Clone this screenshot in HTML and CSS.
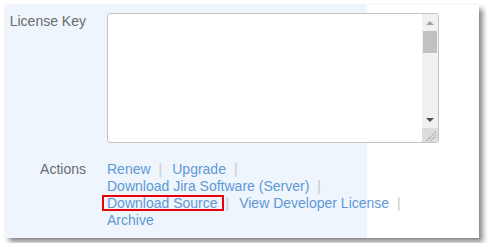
FILE: index.html
```html
<!doctype html>
<html lang="en">
<head>
<meta charset="UTF-8">
<title>License</title>
<link rel="stylesheet" href="styles.css">
</head>
<body>
	<div class="card">
		<div class="row">
			<div class="label">License Key</div>
			<div class="keybox">
				<div class="keytext"></div>
				<div class="scroll">
					<div class="arrow up"></div>
					<div class="thumb"></div>
					<div class="track"></div>
					<div class="arrow down"></div>
					<div class="resizer">
						<svg width="15" height="14" viewBox="0 0 15 14">
							<path d="M4 12.5 L13 3.5 M8 12.5 L13 7.5" stroke="#6b6b6b" stroke-width="1" stroke-dasharray="1 1"/>
						</svg>
					</div>
				</div>
			</div>
		</div>
		<div class="row actions-row">
			<div class="label">Actions</div>
			<div class="actions">
				<span class="item"><a href="#">Renew</a><span class="sep">|</span></span><span class="item"><a href="#">Upgrade</a><span class="sep">|</span></span>
				<span class="item"><a href="#">Download Jira Software (Server)</a><span class="sep">|</span></span>
				<span class="item"><a href="#" class="hover marked">Download Source</a><span class="sep">|</span></span><span class="item"><a href="#">View Developer License</a><span class="sep">|</span></span>
				<span class="item"><a href="#">Archive</a></span>
			</div>
		</div>
	</div>
</body>
</html>
```
FILE: styles.css
```css
body{
	margin:0;
	background:#fff;
	font-family:"Liberation Sans", Arial, sans-serif;
	font-size:14px;
	line-height:17px;
}
.card{
	margin:5px;
	width:474px;
	height:233px;
	box-sizing:border-box;
	padding-top:8px;
	background:linear-gradient(to right, #eef5fc 362px, #fff 362px);
	box-shadow:4px 4px 5px rgba(0,0,0,0.45), 0 0 2px rgba(0,0,0,0.08);
}
.row{
	display:flex;
	gap:21px;
}
.actions-row{
	margin-top:18px;
}
.label{
	width:81px;
	flex:none;
	text-align:right;
	color:#6b6b6b;
}
.keybox{
	width:332px;
	height:130px;
	box-sizing:border-box;
	border:1px solid #c4c4c4;
	border-radius:3px;
	background:#fff;
	display:flex;
	overflow:hidden;
}
.keytext{
	flex:1;
}
.scroll{
	width:16px;
	display:flex;
	flex-direction:column;
	background:#f1f1f1;
}
.arrow{
	height:17px;
	display:flex;
	align-items:center;
	justify-content:center;
}
.arrow::before{
	content:"";
	border-left:4px solid transparent;
	border-right:4px solid transparent;
}
.up::before{
	border-bottom:4px solid #a3a3a3;
}
.down::before{
	border-top:4px solid #505050;
}
.thumb{
	height:22px;
	margin:0 1px 0 1px;
	background:#c1c1c1;
}
.track{
	flex:1;
}
.resizer{
	height:14px;
	background:#dcdcdc;
	display:flex;
	justify-content:flex-end;
}
.actions{
	width:331px;
}
.item{
	white-space:nowrap;
}
.actions a{
	color:#5f98d6;
	text-decoration:none;
}
.actions a.hover{
	text-decoration:underline;
}
.sep{
	color:#c9c9c9;
	margin:0 10px 0 8px;
}
.marked{
	position:relative;
}
.marked::after{
	content:"";
	position:absolute;
	left:-5px;
	right:-6px;
	top:0;
	bottom:0;
	border:2px solid #e8000b;
}
```
